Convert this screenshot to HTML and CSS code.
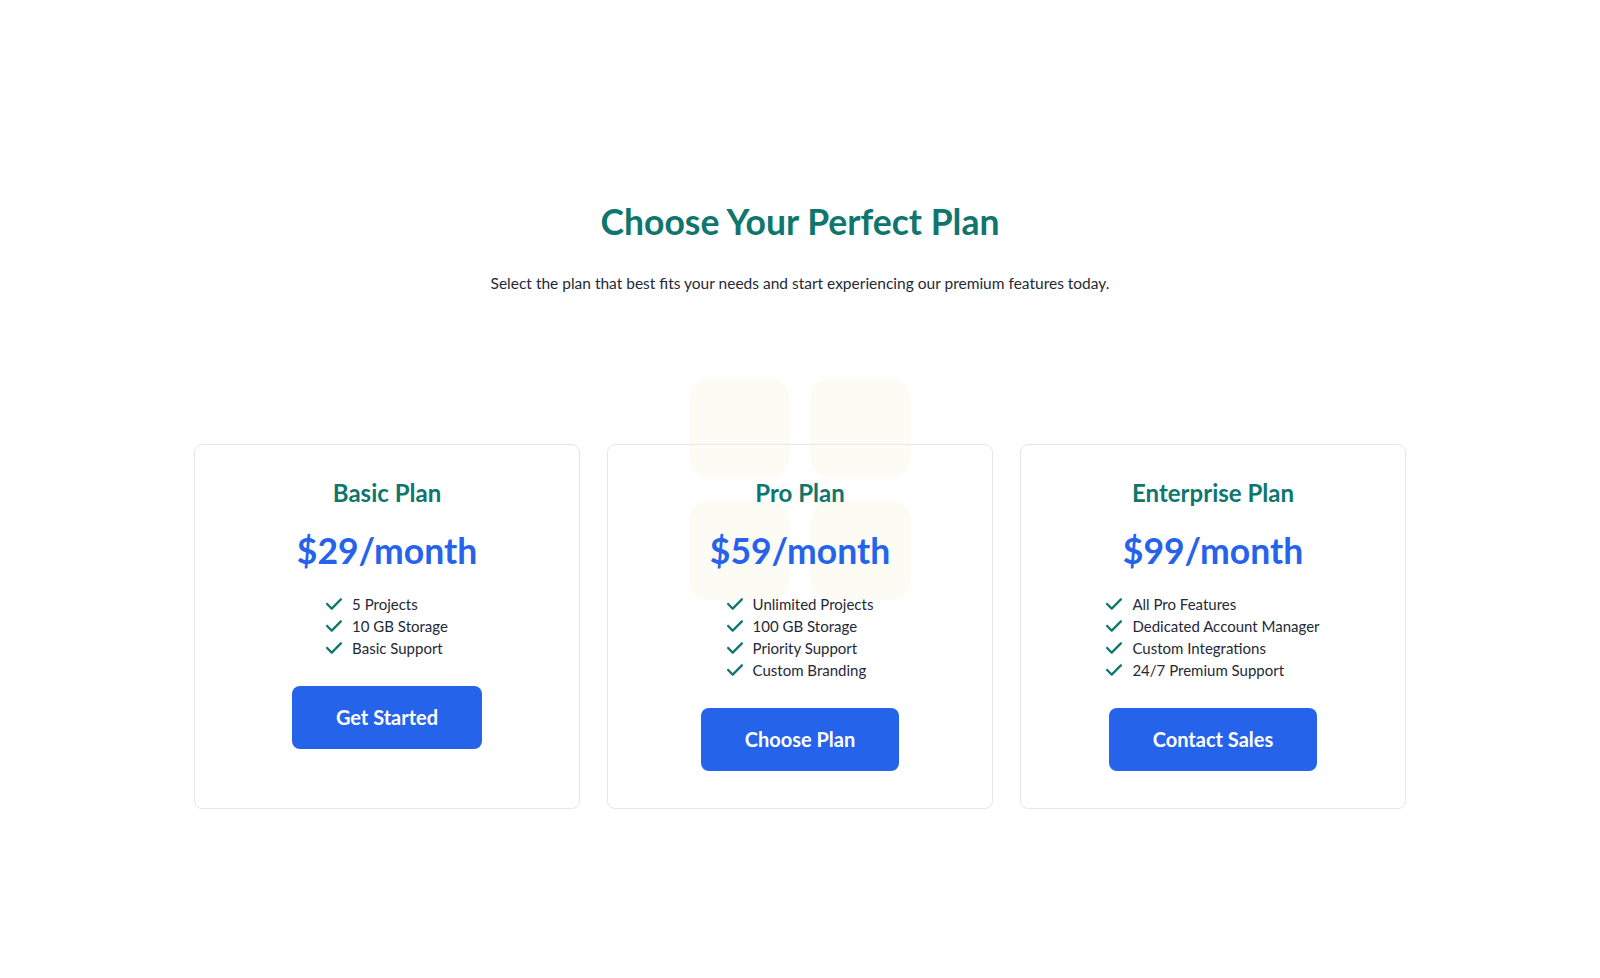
FILE: index.html
```html
<!DOCTYPE html>
<html lang="en">
<head>
    <meta charset="UTF-8">
    <meta name="viewport" content="width=device-width, initial-scale=1.0">
    <title>Pricing</title>
    <link rel="stylesheet" href="styles.css">
</head>
<body>
    <main class="pricing">
        <h1>Choose Your Perfect Plan</h1>
        <p class="subtitle">Select the plan that best fits your needs and start experiencing our premium features today.</p>

        <div class="plans">
            <!-- decorative squares behind the middle card -->
            <div class="decor">
                <span></span><span></span><span></span><span></span>
            </div>

            <div class="card">
                <h2>Basic Plan</h2>
                <div class="price">$29/month</div>
                <ul class="features">
                    <li><svg class="check" viewBox="0 96 448 320"><path d="M438.6 105.4c12.5 12.5 12.5 32.8 0 45.3l-256 256c-12.5 12.5-32.8 12.5-45.3 0l-128-128c-12.5-12.5-12.5-32.8 0-45.3s32.8-12.5 45.3 0L160 338.7 393.4 105.4c12.5-12.5 32.8-12.5 45.3 0z"/></svg>5 Projects</li>
                    <li><svg class="check" viewBox="0 96 448 320"><path d="M438.6 105.4c12.5 12.5 12.5 32.8 0 45.3l-256 256c-12.5 12.5-32.8 12.5-45.3 0l-128-128c-12.5-12.5-12.5-32.8 0-45.3s32.8-12.5 45.3 0L160 338.7 393.4 105.4c12.5-12.5 32.8-12.5 45.3 0z"/></svg>10 GB Storage</li>
                    <li><svg class="check" viewBox="0 96 448 320"><path d="M438.6 105.4c12.5 12.5 12.5 32.8 0 45.3l-256 256c-12.5 12.5-32.8 12.5-45.3 0l-128-128c-12.5-12.5-12.5-32.8 0-45.3s32.8-12.5 45.3 0L160 338.7 393.4 105.4c12.5-12.5 32.8-12.5 45.3 0z"/></svg>Basic Support</li>
                </ul>
                <button>Get Started</button>
            </div>

            <div class="card">
                <h2>Pro Plan</h2>
                <div class="price">$59/month</div>
                <ul class="features">
                    <li><svg class="check" viewBox="0 96 448 320"><path d="M438.6 105.4c12.5 12.5 12.5 32.8 0 45.3l-256 256c-12.5 12.5-32.8 12.5-45.3 0l-128-128c-12.5-12.5-12.5-32.8 0-45.3s32.8-12.5 45.3 0L160 338.7 393.4 105.4c12.5-12.5 32.8-12.5 45.3 0z"/></svg>Unlimited Projects</li>
                    <li><svg class="check" viewBox="0 96 448 320"><path d="M438.6 105.4c12.5 12.5 12.5 32.8 0 45.3l-256 256c-12.5 12.5-32.8 12.5-45.3 0l-128-128c-12.5-12.5-12.5-32.8 0-45.3s32.8-12.5 45.3 0L160 338.7 393.4 105.4c12.5-12.5 32.8-12.5 45.3 0z"/></svg>100 GB Storage</li>
                    <li><svg class="check" viewBox="0 96 448 320"><path d="M438.6 105.4c12.5 12.5 12.5 32.8 0 45.3l-256 256c-12.5 12.5-32.8 12.5-45.3 0l-128-128c-12.5-12.5-12.5-32.8 0-45.3s32.8-12.5 45.3 0L160 338.7 393.4 105.4c12.5-12.5 32.8-12.5 45.3 0z"/></svg>Priority Support</li>
                    <li><svg class="check" viewBox="0 96 448 320"><path d="M438.6 105.4c12.5 12.5 12.5 32.8 0 45.3l-256 256c-12.5 12.5-32.8 12.5-45.3 0l-128-128c-12.5-12.5-12.5-32.8 0-45.3s32.8-12.5 45.3 0L160 338.7 393.4 105.4c12.5-12.5 32.8-12.5 45.3 0z"/></svg>Custom Branding</li>
                </ul>
                <button>Choose Plan</button>
            </div>

            <div class="card">
                <h2>Enterprise Plan</h2>
                <div class="price">$99/month</div>
                <ul class="features">
                    <li><svg class="check" viewBox="0 96 448 320"><path d="M438.6 105.4c12.5 12.5 12.5 32.8 0 45.3l-256 256c-12.5 12.5-32.8 12.5-45.3 0l-128-128c-12.5-12.5-12.5-32.8 0-45.3s32.8-12.5 45.3 0L160 338.7 393.4 105.4c12.5-12.5 32.8-12.5 45.3 0z"/></svg>All Pro Features</li>
                    <li><svg class="check" viewBox="0 96 448 320"><path d="M438.6 105.4c12.5 12.5 12.5 32.8 0 45.3l-256 256c-12.5 12.5-32.8 12.5-45.3 0l-128-128c-12.5-12.5-12.5-32.8 0-45.3s32.8-12.5 45.3 0L160 338.7 393.4 105.4c12.5-12.5 32.8-12.5 45.3 0z"/></svg>Dedicated Account Manager</li>
                    <li><svg class="check" viewBox="0 96 448 320"><path d="M438.6 105.4c12.5 12.5 12.5 32.8 0 45.3l-256 256c-12.5 12.5-32.8 12.5-45.3 0l-128-128c-12.5-12.5-12.5-32.8 0-45.3s32.8-12.5 45.3 0L160 338.7 393.4 105.4c12.5-12.5 32.8-12.5 45.3 0z"/></svg>Custom Integrations</li>
                    <li><svg class="check" viewBox="0 96 448 320"><path d="M438.6 105.4c12.5 12.5 12.5 32.8 0 45.3l-256 256c-12.5 12.5-32.8 12.5-45.3 0l-128-128c-12.5-12.5-12.5-32.8 0-45.3s32.8-12.5 45.3 0L160 338.7 393.4 105.4c12.5-12.5 32.8-12.5 45.3 0z"/></svg>24/7 Premium Support</li>
                </ul>
                <button>Contact Sales</button>
            </div>
        </div>
    </main>
</body>
</html>
```

FILE: styles.css
```css
body {
    margin: 0;
    font-family: Lato, "Noto Sans", sans-serif;
    background-color: #ffffff;
    color: #1f2937;
}
.pricing {
    padding: 201px 0 100px;
    text-align: center;
}
h1 {
    margin: 0;
    font-size: 35.5px;
    line-height: 1.2;
    font-weight: 700;
    color: #0f766e;
}
.subtitle {
    margin: 27px 0 0;
    font-size: 15.5px;
    line-height: 24px;
    color: #1f2937;
}
.plans {
    position: relative;
    z-index: 0;
    margin-top: 149px;
    display: grid;
    grid-template-columns: repeat(3, 386px);
    justify-content: center;
    gap: 27px;
}
.decor {
    position: absolute;
    z-index: -1;
    top: -66px;
    left: 50%;
    transform: translateX(-50%);
    display: grid;
    grid-template-columns: repeat(2, 100px);
    gap: 22px;
}
.decor span {
    display: block;
    height: 100px;
    border-radius: 20px;
    background-color: #fcfbf4;
}
.card {
    border: 1px solid #e5e7eb;
    border-radius: 8px;
    padding: 30px 24px 37px;
}
.card h2 {
    margin: 0;
    font-size: 24px;
    line-height: 36px;
    font-weight: 700;
    color: #0f766e;
}
.price {
    margin-top: 18px;
    font-size: 35.5px;
    line-height: 43px;
    font-weight: 700;
    color: #2563eb;
}
.features {
    display: inline-block;
    margin: 21px 0 0;
    padding: 0;
    list-style: none;
    text-align: left;
    font-size: 15px;
    line-height: 22px;
    color: #1f2937;
}
.features li {
    display: flex;
    align-items: center;
    gap: 10px;
}
.check {
    width: 16px;
    height: 12px;
    fill: #0f766e;
    flex-shrink: 0;
}
button {
    display: block;
    margin: 27px auto 0;
    padding: 16px 44px;
    font-family: inherit;
    font-size: 20px;
    line-height: 31px;
    font-weight: 700;
    color: #ffffff;
    background-color: #2563eb;
    border: none;
    border-radius: 8px;
    cursor: pointer;
}
button:hover {
    background-color: #1d4ed8;
}
```
